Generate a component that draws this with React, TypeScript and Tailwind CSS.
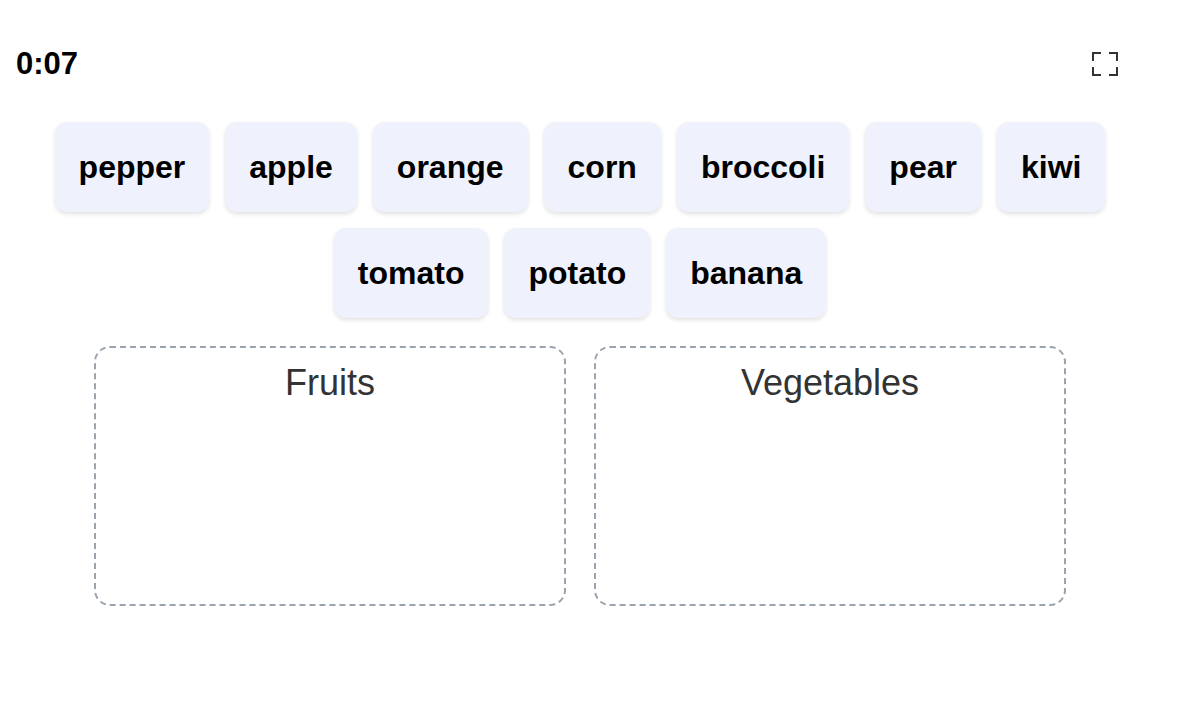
import React from "react";

const row1 = ["pepper", "apple", "orange", "corn", "broccoli", "pear", "kiwi"];
const row2 = ["tomato", "potato", "banana"];

function Chip({ label }: { label: string }) {
  return (
    <div className="rounded-xl bg-[#eff2fd] px-6 py-6 text-[32px] leading-[42px] font-bold text-black shadow-[0_2px_4px_rgba(0,0,0,0.12)]">
      {label}
    </div>
  );
}

function Zone({ label }: { label: string }) {
  return (
    <div className="w-[472px] h-[260px] rounded-2xl border-2 border-dashed border-[#9aa4ae] pt-[14px] text-center text-[36px] leading-[41px] text-[#333333]">
      {label}
    </div>
  );
}

export default function App() {
  return (
    <div
      className="w-[1200px] h-[718px] bg-white"
      style={{ fontFamily: '"Liberation Sans", Arial, sans-serif' }}
    >
      <div className="w-[1160px]">
        <div className="flex items-center justify-between pt-[47px] pl-4 pr-[42px]">
          <div className="text-[31px] leading-[33px] font-bold text-black">0:07</div>
          <svg width="26" height="24" viewBox="0 0 26 24" fill="none" stroke="#333333" strokeWidth="2">
            <path d="M1 9V1h8" />
            <path d="M17 1h8v8" />
            <path d="M1 15v8h8" />
            <path d="M17 23h8v-8" />
          </svg>
        </div>
        <div className="mt-[42px] flex flex-col items-center gap-4">
          <div className="flex justify-center gap-4">
            {row1.map((w) => (
              <Chip key={w} label={w} />
            ))}
          </div>
          <div className="flex justify-center gap-4">
            {row2.map((w) => (
              <Chip key={w} label={w} />
            ))}
          </div>
        </div>
        <div className="mt-[28px] flex justify-center gap-[28px]">
          <Zone label="Fruits" />
          <Zone label="Vegetables" />
        </div>
      </div>
    </div>
  );
}
